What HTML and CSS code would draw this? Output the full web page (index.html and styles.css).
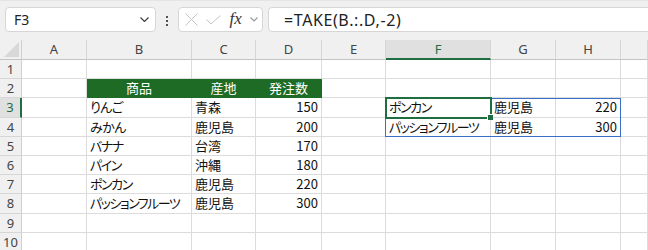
FILE: index.html
```html
<!DOCTYPE html>
<html lang="ja">
<head>
  <meta charset="utf-8">
  <title>TAKE - Book1</title>
  <link rel="stylesheet" href="styles.css">
</head>
<body>
  <!-- formula bar -->
  <div class="fbar">
    <div class="namebox">
      <span>F3</span>
      <svg class="chev" width="9" height="5" viewBox="0 0 9 5"><polyline points="0.5,0.5 4.5,4.5 8.5,0.5"/></svg>
    </div>
    <div class="grip"><i></i><i></i><i></i></div>
    <div class="fxbox">
      <svg class="ico" width="13" height="13" viewBox="0 0 13 13"><line x1="0.5" y1="0.5" x2="12.5" y2="12.5"/><line x1="12.5" y1="0.5" x2="0.5" y2="12.5"/></svg>
      <svg class="ico" width="15" height="10" viewBox="0 0 15 10"><polyline points="0.5,4.5 5,9 14.5,0.5"/></svg>
      <span class="fx">fx</span>
      <svg class="chev light" width="8" height="5" viewBox="0 0 8 5"><polyline points="0.5,0.5 4,4 7.5,0.5"/></svg>
    </div>
    <div class="formula">=TAKE(B.:.D,-2)</div>
  </div>

  <!-- sheet -->
  <div class="sheet">
    <div class="grid">
      <div class="corner"><span></span></div>
      <div class="ch">A</div><div class="ch">B</div><div class="ch">C</div><div class="ch">D</div><div class="ch">E</div>
      <div class="ch on">F</div><div class="ch">G</div><div class="ch">H</div><div class="ch"></div>

      <div class="rh">1</div>
      <div class="c"></div><div class="c"></div><div class="c"></div><div class="c"></div><div class="c"></div><div class="c"></div><div class="c"></div><div class="c"></div><div class="c"></div>

      <div class="rh">2</div>
      <div class="c"></div><div class="c th">商品</div><div class="c th">産地</div><div class="c th">発注数</div>
      <div class="c"></div><div class="c"></div><div class="c"></div><div class="c"></div><div class="c"></div>

      <div class="rh on">3</div>
      <div class="c"></div><div class="c hira">りんご</div><div class="c">青森</div><div class="c n">150</div>
      <div class="c"></div><div class="c kata">ポンカン</div><div class="c">鹿児島</div><div class="c n">220</div><div class="c"></div>

      <div class="rh">4</div>
      <div class="c"></div><div class="c hira">みかん</div><div class="c">鹿児島</div><div class="c n">200</div>
      <div class="c"></div><div class="c kata">パッションフルーツ</div><div class="c">鹿児島</div><div class="c n">300</div><div class="c"></div>

      <div class="rh">5</div>
      <div class="c"></div><div class="c kata">バナナ</div><div class="c">台湾</div><div class="c n">170</div>
      <div class="c"></div><div class="c"></div><div class="c"></div><div class="c"></div><div class="c"></div>

      <div class="rh">6</div>
      <div class="c"></div><div class="c kata">パイン</div><div class="c">沖縄</div><div class="c n">180</div>
      <div class="c"></div><div class="c"></div><div class="c"></div><div class="c"></div><div class="c"></div>

      <div class="rh">7</div>
      <div class="c"></div><div class="c kata">ポンカン</div><div class="c">鹿児島</div><div class="c n">220</div>
      <div class="c"></div><div class="c"></div><div class="c"></div><div class="c"></div><div class="c"></div>

      <div class="rh">8</div>
      <div class="c"></div><div class="c kata">パッションフルーツ</div><div class="c">鹿児島</div><div class="c n">300</div>
      <div class="c"></div><div class="c"></div><div class="c"></div><div class="c"></div><div class="c"></div>

      <div class="rh">9</div>
      <div class="c"></div><div class="c"></div><div class="c"></div><div class="c"></div><div class="c"></div><div class="c"></div><div class="c"></div><div class="c"></div><div class="c"></div>

      <div class="rh">10</div>
      <div class="c"></div><div class="c"></div><div class="c"></div><div class="c"></div><div class="c"></div><div class="c"></div><div class="c"></div><div class="c"></div><div class="c"></div>
    </div>

    <!-- selection + spill range drawn over the cells -->
    <div class="marks">
      <div class="spill"></div>
      <div class="sel"></div>
    </div>
  </div>
</body>
</html>
```

FILE: styles.css
```css
body {
  margin: 0;
  width: 648px;
  height: 250px;
  overflow: hidden;
  background: #f0f0f0;
  font-family: "Noto Sans", "Noto Sans CJK JP", sans-serif;
  color: #222;
}

/* formula bar */
.fbar {
  height: 40px;
  box-sizing: border-box;
  padding: 7px 0 0 5px;
  display: flex;
  align-items: flex-start;
  border-top: 1px solid #e4e4e4;
}

.namebox,
.fxbox,
.formula {
  height: 25px;
  box-sizing: border-box;
  background: #fff;
  border: 1px solid #d6d6d6;
  border-radius: 4px;
  display: flex;
  align-items: center;
  margin-top: -1px;
}

.namebox {
  width: 151px;
  padding: 0 6px 0 8px;
  justify-content: space-between;
  font-size: 14px;
}

.chev polyline,
.ico line,
.ico polyline {
  fill: none;
  stroke: #404040;
  stroke-width: 1.2;
}

.ico line,
.ico polyline {
  stroke: #c4c4c4;
  stroke-width: 1;
}

.chev.light polyline {
  stroke: #9a9a9a;
}

.grip {
  width: 22px;
  height: 25px;
  display: flex;
  flex-direction: column;
  align-items: center;
  justify-content: center;
  gap: 2px;
}

.grip i {
  width: 2px;
  height: 2px;
  background: #505050;
}

.fxbox {
  width: 85px;
  padding: 0 4px 0 6px;
  justify-content: space-between;
}

.fx {
  font-family: "Liberation Serif", serif;
  font-style: italic;
  font-size: 17px;
  color: #333;
  margin-top: -2px;
}

.formula {
  margin-left: 5px;
  flex: 1;
  margin-right: -10px;
  padding-left: 15px;
  font-size: 16px;
  letter-spacing: 0.6px;
}

/* grid */
.sheet {
  position: relative;
}

.grid,
.marks {
  display: grid;
  grid-template-columns: 22px 65px 105px 64px 66px 64px 105px 65px 65px 1fr;
  grid-template-rows: 20px repeat(10, 19.2px);
}

.marks {
  position: absolute;
  inset: 0;
  pointer-events: none;
}

.corner {
  position: relative;
  border-right: 1px solid #cfcfcf;
  border-bottom: 1px solid #c4c4c4;
}

.corner span {
  position: absolute;
  right: 2px;
  bottom: 2px;
  width: 0;
  height: 0;
  border-left: 15px solid transparent;
  border-bottom: 15px solid #d8d8d8;
}

.ch {
  box-sizing: border-box;
  border-right: 1px solid #d6d6d6;
  border-bottom: 1px solid #c4c4c4;
  text-align: center;
  font-size: 13px;
  line-height: 19px;
  color: #444;
}

.ch.on {
  background: #e0e0e0;
  border-bottom: 2px solid #1e6e42;
  line-height: 18px;
  color: #1e6e42;
}

.rh {
  box-sizing: border-box;
  border-right: 1px solid #cfcfcf;
  border-bottom: 1px solid #d6d6d6;
  text-align: center;
  font-size: 13px;
  line-height: 18px;
  color: #444;
}

.rh.on {
  background: #e0e0e0;
  border-right: 2px solid #1e6e42;
  color: #1e6e42;
}

.c {
  box-sizing: border-box;
  background: #fff;
  border-right: 1px solid #dcdcdc;
  border-bottom: 1px solid #dcdcdc;
  padding: 0 3px;
  font-family: "Noto Sans CJK JP", sans-serif;
  font-feature-settings: "palt";
  font-size: 13px;
  line-height: 18px;
  color: #111;
  white-space: nowrap;
  overflow: hidden;
}

/* Excel's UI font has narrow kana */
.c.hira {
  letter-spacing: -0.6px;
}

.c.kata {
  letter-spacing: -1.5px;
}

.c.n {
  text-align: right;
}

.c.th {
  background: #1d6b25;
  border-color: #1d6b25;
  color: #fff;
  text-align: center;
}

.spill {
  grid-column: 7 / 10;
  grid-row: 4 / 6;
  margin-left: -1px;
  border: 1px solid #3a6fc8;
}

.sel {
  grid-column: 7 / 8;
  grid-row: 4 / 5;
  position: relative;
  margin: -1px;
  border: 2px solid #1e6e42;
}

.sel::after {
  content: "";
  position: absolute;
  right: -3px;
  bottom: -3px;
  width: 5px;
  height: 5px;
  background: #1e6e42;
  border-left: 1px solid #fff;
  border-top: 1px solid #fff;
}
```
